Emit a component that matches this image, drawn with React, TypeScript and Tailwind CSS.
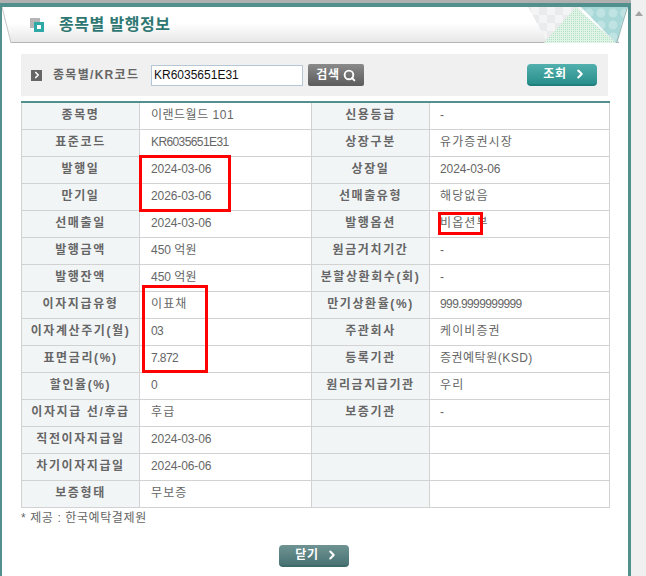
import { Search, ChevronRight } from 'lucide-react';

const rows: [string, string, string, string][] = [
  ['종목명', '이랜드월드 101', '신용등급', '-'],
  ['표준코드', 'KR6035651E31', '상장구분', '유가증권시장'],
  ['발행일', '2024-03-06', '상장일', '2024-03-06'],
  ['만기일', '2026-03-06', '선매출유형', '해당없음'],
  ['선매출일', '2024-03-06', '발행옵션', '비옵션부'],
  ['발행금액', '450 억원', '원금거치기간', '-'],
  ['발행잔액', '450 억원', '분할상환회수(회)', '-'],
  ['이자지급유형', '이표채', '만기상환율(%)', '999.9999999999'],
  ['이자계산주기(월)', '03', '주관회사', '케이비증권'],
  ['표면금리(%)', '7.872', '등록기관', '증권예탁원(KSD)'],
  ['할인율(%)', '0', '원리금지급기관', '우리'],
  ['이자지급 선/후급', '후급', '보증기관', '-'],
  ['직전이자지급일', '2024-03-06', '', ''],
  ['차기이자지급일', '2024-06-06', '', ''],
  ['보증형태', '무보증', '', ''],
];

const font = "font-['Liberation_Sans','Noto_Sans_CJK_KR',sans-serif]";

// Korean runs wider than the fallback font, latin digits narrower
const valueClass = (v: string) => {
  if (/^[가-힣]+$/.test(v)) return 'tracking-[1.1px]';
  if (v.includes('(KSD)') || v.includes('101')) return 'tracking-[0.5px]';
  if (v.includes('억원')) return 'tracking-[0px]';
  if (v.includes('-') && v.length > 1) return 'tracking-[-0.1px]';
  return 'tracking-[-0.6px]';
};

const HeaderDecor = () => (
  <svg className="absolute right-0 top-0" width="105" height="36" viewBox="0 0 105 36">
    <defs>
      <pattern id="checks" width="16" height="16" patternUnits="userSpaceOnUse">
        <rect width="16" height="16" fill="#f4f4f4" />
        <rect width="8" height="8" fill="#e9ebec" />
        <rect x="8" y="8" width="8" height="8" fill="#e9ebec" />
      </pattern>
      <pattern id="dots" width="12" height="12" patternUnits="userSpaceOnUse">
        <rect width="12" height="12" fill="#a9d8d8" />
        <circle cx="6" cy="6" r="4.5" fill="#bfe2e2" />
      </pattern>
      <pattern id="lines" width="2" height="2" patternUnits="userSpaceOnUse">
        <rect width="2" height="2" fill="#dff3e6" />
        <rect width="1" height="1" fill="#b4e0c6" />
      </pattern>
    </defs>
    <polygon points="5,0 64,0 42,20 25,36" fill="url(#checks)" />
    <polygon points="58,0 104,0 93,36" fill="url(#dots)" />
    <polygon points="53,0 93,36 21,36" fill="url(#lines)" />
    <line x1="104.5" y1="0" x2="93.5" y2="36" stroke="#8fb5b5" />
  </svg>
);

const Arrow = () => <ChevronRight size={14} strokeWidth={3.5} className="text-white" />;

const thClass =
  'border border-[#d2d2d2] bg-[#f2f5f6] p-0 pb-[2px] text-center text-[12px] font-bold tracking-[1.6px] text-[#666]';

export default function App() {
  return (
    <div className={`${font} flex h-[576px] w-[646px] overflow-hidden bg-white text-[12px] text-[#666]`}>
      <div className="relative flex h-full w-[631px] flex-col bg-white">
        <div className="h-[3px] w-full bg-[#b0b0b0]" />
        <div className="h-[4px] w-full bg-[#52908e]" />
        <div className="flex flex-1 border-l-2 border-r-[3px] border-[#52908e]">
          <div className="relative min-w-0 flex-1">
            {/* title bar */}
            <div className="relative h-[36px] w-full">
              <div className="h-[36px] w-full bg-gradient-to-b from-white from-45% to-[#e6e6e6] [clip-path:polygon(0_0,100%_0,616px_100%,9px_100%)]" />
              <div className="absolute bottom-0 left-[9px] h-[1px] w-[608px] bg-[#b4b4b4]" />
              <svg className="absolute left-0 top-0" width="10" height="36">
                <line x1="0" y1="0" x2="9" y2="36" stroke="#c4c4c4" />
              </svg>
              <HeaderDecor />
              <div className="absolute left-[28px] top-[11px] h-[10px] w-[10px] bg-[#b5b5b5]" />
              <div className="absolute left-[32px] top-[15px] h-[10px] w-[10px] border-[3px] border-[#2fa8a8] bg-white" />
              <div className="absolute left-[57px] top-[8px] text-[16px] font-bold leading-[20px] tracking-[0.5px] text-[#2e7773]">
                종목별 발행정보
              </div>
            </div>

            {/* search bar */}
            <div className="ml-[19px] mt-[11px] flex h-[42px] w-[587px] items-center bg-[#f0f0f0]">
              <div className="ml-[10px] flex h-[11px] w-[11px] items-center justify-center bg-[#666]">
                <ChevronRight size={10} strokeWidth={4} className="text-white" />
              </div>
              <span className="ml-[11px] w-[98px] text-[12px] font-bold leading-none tracking-[1.3px] text-[#666]">
                종목별/KR코드
              </span>
              <input
                readOnly
                value="KR6035651E31"
                className="h-[21px] w-[152px] border border-[#b5c6d6] bg-white px-[2px] text-[12px] leading-none text-[#111] outline-none"
              />
              <button className="ml-[5px] flex h-[22px] w-[56px] items-center justify-center gap-[3px] rounded-[2px] bg-gradient-to-b from-[#8a8a8a] to-[#5c5c5c] text-[12px] font-bold tracking-[0.8px] text-white">
                검색 <Search size={13} strokeWidth={3.5} />
              </button>
              <button className="ml-auto mr-[11px] flex h-[22px] w-[70px] items-center justify-center gap-[6px] rounded-[4px] border-b-2 border-[#1f7f7c] bg-gradient-to-b from-[#52b0ad] to-[#278f8c] pl-[6px] text-[12px] font-bold tracking-[0.8px] text-white">
                조회 <Arrow />
              </button>
            </div>

            {/* info table */}
            <table className="ml-[19px] mt-[5px] w-[588px] table-fixed border-collapse border-t-2 border-t-[#52908e]">
              <colgroup>
                <col className="w-[118px]" />
                <col className="w-[172px]" />
                <col className="w-[118px]" />
                <col className="w-[180px]" />
              </colgroup>
              <tbody>
                {rows.map((r) => (
                  <tr key={r[0]} className="h-[27px]">
                    <th className={thClass}>{r[0]}</th>
                    <td className={`border border-[#d2d2d2] p-0 pb-[2px] pl-[11px] ${valueClass(r[1])}`}>{r[1]}</td>
                    <th className={thClass}>{r[2]}</th>
                    <td className={`border border-[#d2d2d2] p-0 pb-[2px] pl-[10px] ${valueClass(r[3])}`}>{r[3]}</td>
                  </tr>
                ))}
              </tbody>
            </table>

            <p className="ml-[19px] mt-[2px] text-[12px] leading-[16px] tracking-[0.6px] text-[#666]">
              * 제공 : 한국예탁결제원
            </p>

            <div className="mt-[19px] flex justify-center pr-[2px]">
              <button className="flex h-[22px] w-[70px] items-center justify-center gap-[6px] rounded-[4px] border-b-2 border-[#3f6a6a] bg-gradient-to-b from-[#6f9393] to-[#4a7373] pl-[6px] text-[12px] font-bold tracking-[0.8px] text-white">
                닫기 <Arrow />
              </button>
            </div>
          </div>
        </div>

        {/* red annotation boxes */}
        <div className="absolute left-[139px] top-[155px] h-[57px] w-[92px] border-[3px] border-[#f00]" />
        <div className="absolute left-[438px] top-[212px] h-[23px] w-[45px] border-[3px] border-[#f00]" />
        <div className="absolute left-[142px] top-[285px] h-[88px] w-[66px] border-[3px] border-[#f00]" />
      </div>

      {/* scrollbar */}
      <div className="h-full w-[15px] bg-[#f0f0f0] pl-[4px] pt-[11px]">
        <div className="h-0 w-0 border-x-[4px] border-b-[5px] border-x-transparent border-b-[#a3a3a3]" />
      </div>
    </div>
  );
}
